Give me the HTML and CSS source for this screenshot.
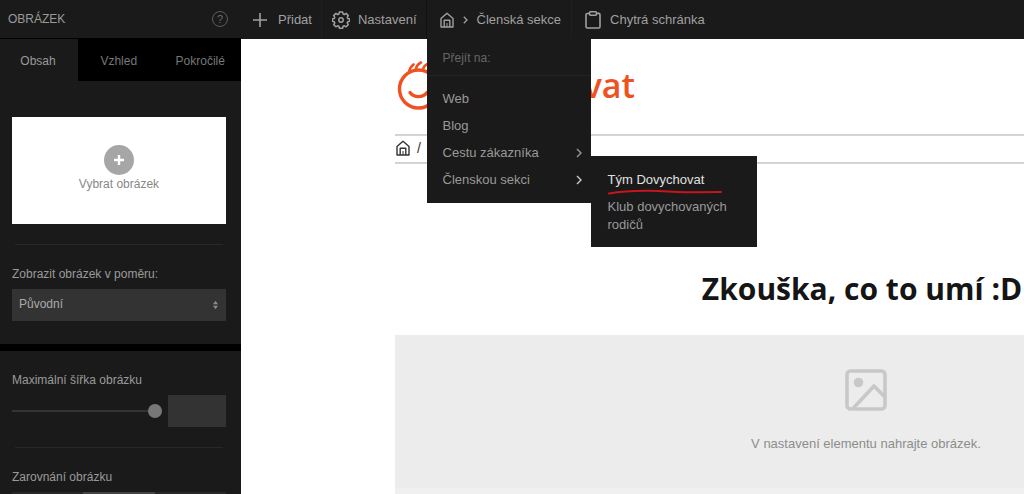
FILE: index.html
```html
<!DOCTYPE html>
<html lang="cs">
<head>
<meta charset="utf-8">
<meta name="viewport" content="width=device-width, initial-scale=1">
<title>Editor – Obrázek</title>
<link rel="stylesheet" href="styles.css">
</head>
<body>
<div class="editor">
  <aside class="panel">
    <header class="panel-head">
      <h2 class="panel-title">OBRÁZEK</h2>
      <button class="help" type="button" aria-label="Nápověda">?</button>
    </header>
    <div class="tabs" role="tablist">
      <button class="tab tab-active" type="button" role="tab" aria-selected="true">Obsah</button>
      <button class="tab" type="button" role="tab" aria-selected="false">Vzhled</button>
      <button class="tab" type="button" role="tab" aria-selected="false">Pokročilé</button>
    </div>
    <section class="group group-source">
      <button class="picker" type="button">
        <svg class="picker-icon" viewBox="0 0 30 30" aria-hidden="true"><circle cx="15" cy="15" r="15" fill="#a6a6a6"/><path d="M15 10v10M10 15h10" stroke="#fff" stroke-width="2.4"/></svg>
        <span>Vybrat obrázek</span>
      </button>
      <hr class="rule">
      <label class="label" for="ratio">Zobrazit obrázek v poměru:</label>
      <div class="select-wrap">
        <select class="select" id="ratio"><option>Původní</option></select>
        <svg class="select-icon" viewBox="0 0 6 10" aria-hidden="true"><path d="M3 0l3 4H0zM3 10L0 6h6z" fill="#8a8a8a"/></svg>
      </div>
    </section>
    <section class="group group-size">
      <label class="label" for="width-range">Maximální šířka obrázku</label>
      <div class="size-row">
        <input class="range" id="width-range" type="range" min="0" max="100" value="100">
        <input class="number" type="text" aria-label="Šířka v pixelech">
      </div>
      <hr class="rule">
      <span class="label" id="align-label">Zarovnání obrázku</span>
      <div class="segments" role="group" aria-labelledby="align-label">
        <button class="segment" type="button" aria-label="Vlevo"></button>
        <button class="segment segment-active" type="button" aria-label="Na střed"></button>
        <button class="segment" type="button" aria-label="Vpravo"></button>
      </div>
    </section>
  </aside>

  <div class="stage">
    <nav class="toolbar">
      <button class="tool tool-add" type="button">
        <svg class="icon-plus" viewBox="0 0 14 14" aria-hidden="true"><path d="M7 0v14M0 7h14" stroke="currentColor" stroke-width="1.6"/></svg>
        Přidat
      </button>
      <button class="tool tool-settings" type="button">
        <svg class="icon-gear" viewBox="0 0 18 18" fill="none" stroke="currentColor" stroke-width="1.5" stroke-linejoin="round" aria-hidden="true"><path d="M7.400 1h3.200l.5 2 1.300.5 1.700-1.100 2.200 2.200-1.100 1.700.6 1.300 1.900.4v2.200l-1.900.5-.6 1.200 1.100 1.700-2.200 2.200-1.700-1-1.300.5-.5 1.900H7.400l-.5-1.900-1.300-.5-1.700 1-2.200-2.200 1.100-1.700-.6-1.200-1.900-.5V8l1.900-.4.6-1.300-1.100-1.700 2.200-2.200 1.700 1.100L6.900 3z"/><circle cx="9" cy="9" r="2.200"/></svg>
        Nastavení
      </button>
      <div class="tool-slot">
        <button class="tool tool-section" type="button" aria-expanded="true">
          <svg class="icon-home" viewBox="0 0 14 16" fill="none" stroke="currentColor" stroke-width="1.4" stroke-linejoin="round" aria-hidden="true"><path d="M1 6.500L7 1.200l6 5.300V15H1z"/><path d="M4.200 15V8.200h5.600V15"/><path d="M7 11v4" stroke-width="1"/></svg>
          <svg class="icon-step" viewBox="0 0 5 8" fill="none" stroke="currentColor" stroke-width="1.3" aria-hidden="true"><path d="M.8.8L4 4 .8 7.200"/></svg>
          Členská sekce
        </button>
        <div class="menu">
          <p class="menu-title">Přejít na:</p>
          <ul class="menu-list">
            <li><a class="menu-link" href="#">Web</a></li>
            <li><a class="menu-link" href="#">Blog</a></li>
            <li><a class="menu-link" href="#">Cestu zákazníka
              <svg class="chevron" viewBox="0 0 6 10" fill="none" stroke="currentColor" stroke-width="1.4" aria-hidden="true"><path d="M1 1l4 4-4 4"/></svg></a></li>
            <li class="menu-open"><a class="menu-link" href="#">Členskou sekci
              <svg class="chevron chevron-on" viewBox="0 0 6 10" fill="none" stroke="currentColor" stroke-width="1.4" aria-hidden="true"><path d="M1 1l4 4-4 4"/></svg></a>
              <ul class="submenu">
                <li><a class="submenu-link submenu-current" href="#">Tým Dovychovat
                  <svg class="scribble" viewBox="0 0 116 8" fill="none" stroke="#c4161c" stroke-width="2" stroke-linecap="round" aria-hidden="true"><path d="M1 4.500C12 2.500 26 1.500 42 1.700S66 3.500 80 3.200s24-.3 33-.3"/></svg></a></li>
                <li><a class="submenu-link" href="#">Klub dovychovaných rodičů</a></li>
              </ul>
            </li>
          </ul>
        </div>
      </div>
      <button class="tool tool-clip" type="button">
        <svg class="icon-clip" viewBox="0 0 16 18" fill="none" stroke="currentColor" stroke-width="1.6" stroke-linejoin="round" aria-hidden="true"><path d="M4.500 2.500H2.300A1.300 1.300 0 0 0 1 3.800v12A1.300 1.300 0 0 0 2.300 17h11.400a1.300 1.300 0 0 0 1.300-1.300v-12a1.300 1.300 0 0 0-1.300-1.300h-2.200"/><path d="M4.500 1.800a1 1 0 0 1 1-1h5a1 1 0 0 1 1 1v1.500a1 1 0 0 1-1 1h-5a1 1 0 0 1-1-1z"/></svg>
        Chytrá schránka
      </button>
    </nav>

    <main class="canvas">
      <div class="page">
        <a class="logo" href="#">
          <svg class="logo-face" viewBox="0 0 46 50" fill="none" stroke="#ef5220" stroke-width="3.400" stroke-linecap="round" aria-hidden="true"><circle cx="21.500" cy="29" r="19"/><path d="M12 12c.5-3 2-5.500 4.500-7.500M18.500 10.500c.5-3.500 2.500-6.500 5.500-8M26 10c.5-3 2.500-5.500 5.500-6.500" stroke-width="2.600"/><path d="M13 32.500c4 5.500 13 5.500 17 0"/></svg>
          <span>vat</span>
        </a>
        <nav class="crumbs" aria-label="Drobečková navigace">
          <a class="crumb-home" href="#" aria-label="Domů"><svg class="icon-home" viewBox="0 0 14 16" fill="none" stroke="currentColor" stroke-width="1.400" stroke-linejoin="round" aria-hidden="true"><path d="M1 6.500L7 1.200l6 5.300V15H1z"/><path d="M4.200 15V8.200h5.600V15"/><path d="M7 11v4" stroke-width="1"/></svg></a>
          <span>/</span>
        </nav>
        <h1 class="headline">Zkouška, co to umí :D</h1>
        <div class="placeholder">
          <svg class="placeholder-icon" viewBox="0 0 42 42" fill="none" stroke="#c8c8c8" stroke-width="3.600" stroke-linejoin="round" aria-hidden="true"><rect x="2" y="2" width="38" height="38" rx="3.500"/><circle cx="13.500" cy="13.500" r="4.800" fill="#c8c8c8" stroke="none"/><path d="M8 39.500L29 17l11 11"/></svg>
          <p class="placeholder-text">V nastavení elementu nahrajte obrázek.</p>
        </div>
        <div class="page-next"></div>
      </div>
    </main>
  </div>
</div>
</body>
</html>
```

FILE: styles.css
```css
* { box-sizing: border-box; }

body {
  margin: 0;
  background: #fff;
  color: #9a9a9a;
  font-family: "Liberation Sans", Arial, sans-serif;
  font-size: 12px;
  line-height: 18px;
}

button, input, select {
  margin: 0;
  padding: 0;
  border: 0;
  color: inherit;
  font: inherit;
  background: none;
}

a { color: inherit; text-decoration: none; }
ul { margin: 0; padding: 0; list-style: none; }
p { margin: 0; }
svg { display: block; flex: none; }

.editor {
  display: grid;
  grid-template-columns: 241px minmax(0, 1fr);
  height: 100vh;
  overflow: hidden;
}

/* Settings panel */
.panel { background: #1a1a1a; overflow: hidden; }

.panel-head {
  display: flex;
  align-items: center;
  justify-content: space-between;
  height: 39px;
  padding: 0 13px 0 8px;
  border-bottom: 1px solid #000;
}

.panel-title { margin: 0; font-size: 12px; font-weight: 400; }

.help {
  width: 16px;
  height: 16px;
  border: 1px solid #5c5c5c;
  border-radius: 50%;
  color: #6c6c6c;
  font-size: 11px;
  line-height: 14px;
}

.tabs { display: grid; grid-template-columns: 78px 1fr 1fr; background: #000; }
.tab { height: 42px; padding-top: 2px; color: #777; }
.tab-active { padding-right: 2px; background: #1a1a1a; color: #999; }

.group { padding: 0 15px 0 12px; }
.group-source { padding-top: 36px; padding-bottom: 23px; border-bottom: 7px solid #000; }
.group-size { padding-top: 20px; }

.picker {
  display: flex;
  flex-direction: column;
  align-items: center;
  justify-content: center;
  width: 100%;
  height: 107px;
  padding-bottom: 4px;
  background: #fff;
  color: #888;
}
.picker-icon { width: 30px; height: 30px; }

.rule { margin: 20px 3px; border: 0; border-top: 1px solid #282828; }

.label { display: block; }

.select-wrap { position: relative; margin-top: 6px; }
.select {
  width: 100%;
  height: 32px;
  padding: 0 7px 2px;
  appearance: none;
  background: #333;
  color: #aaa;
}
.select-icon { position: absolute; top: 11px; right: 8px; width: 5px; height: 10px; }

.size-row { display: flex; align-items: center; gap: 6px; margin-top: 6px; }

.range { flex: 1; min-width: 0; height: 14px; appearance: none; }
.range::-webkit-slider-runnable-track { height: 2px; background: #333; }
.range::-webkit-slider-thumb {
  width: 14px;
  height: 14px;
  margin-top: -6px;
  border-radius: 50%;
  appearance: none;
  background: #777;
}
.number { width: 58px; height: 32px; background: #333; }

.segments { display: grid; grid-template-columns: repeat(3, 1fr); margin-top: 6px; }
.segment { height: 32px; background: #282828; }
.segment-active { background: #444; }

/* Top toolbar */
.toolbar { display: flex; height: 39px; background: #1a1a1a; font-size: 13px; }

.tool { display: flex; align-items: center; height: 39px; color: #a0a0a0; white-space: nowrap; }
.tool-add { gap: 11px; padding: 0 9px 0 12px; border-right: 1px solid #202020; }
.tool-settings { gap: 8px; padding: 0 9px 0 10px; border-right: 1px solid #111; }
.tool-section { gap: 9px; padding: 0 10px 0 13px; border-right: 1px solid #202020; }
.tool-clip { gap: 9px; padding: 0 13px; }
.tool-slot { position: relative; }

.icon-plus { width: 14px; height: 14px; }
.icon-gear { width: 18px; height: 18px; }
.icon-home { width: 14px; height: 16px; }
.icon-step { width: 5px; height: 8px; }
.icon-clip { width: 16px; height: 18px; }

.menu {
  position: absolute;
  top: 38px;
  left: 0;
  z-index: 2;
  width: 164px;
  padding-bottom: 10px;
  background: #1a1a1a;
  color: #999;
}
.menu-title { padding: 11px 16px 8px; border-bottom: 1px solid #242424; color: #666; font-size: 12px; }
.menu-list { padding-top: 9px; }
.menu-link {
  display: flex;
  align-items: center;
  justify-content: space-between;
  height: 27px;
  padding: 0 9px 0 16px;
}
.chevron { width: 6px; height: 10px; }
.chevron-on { color: #ccc; }
.menu-open { position: relative; }

.submenu {
  position: absolute;
  top: -10px;
  left: 100%;
  width: 166px;
  padding: 15px 16px 13px 17px;
  background: #1a1a1a;
}
.submenu-link { display: block; }
.submenu-current { position: relative; margin-bottom: 9px; color: #e0e0e0; }
.scribble { position: absolute; top: 18px; left: 0; width: 116px; height: 8px; }

/* Edited page */
.canvas { overflow: hidden; padding-left: 154px; }
.page { width: 942px; }

.logo {
  display: flex;
  align-items: center;
  justify-content: space-between;
  width: 240px;
  height: 95px;
  padding: 0 0 4px 2px;
  color: #ef5220;
  font-family: "Open Sans", "Noto Sans", sans-serif;
  font-size: 34px;
  font-weight: 600;
  line-height: 48px;
}
.logo-face { width: 46px; height: 50px; }

.crumbs {
  display: flex;
  align-items: center;
  gap: 7px;
  height: 30px;
  padding-bottom: 2px;
  border: solid #d4d4d4;
  border-width: 2px 0;
  color: #333;
  font-size: 14px;
}
.crumb-home { padding-left: 1px; }

.headline {
  margin: 103px 0 24px;
  padding-right: 8px;
  color: #151515;
  font-family: "Open Sans", "Noto Sans", sans-serif;
  font-size: 30px;
  font-weight: 700;
  line-height: 44px;
  text-align: center;
}

.placeholder {
  display: flex;
  flex-direction: column;
  align-items: center;
  gap: 24px;
  padding: 34px 0 35px;
  background: #ececec;
}
.placeholder-icon { width: 42px; height: 42px; }
.placeholder-text { color: #8c8c8c; font-size: 13px; }
.page-next { height: 40px; background: #f0f0f0; }
```
